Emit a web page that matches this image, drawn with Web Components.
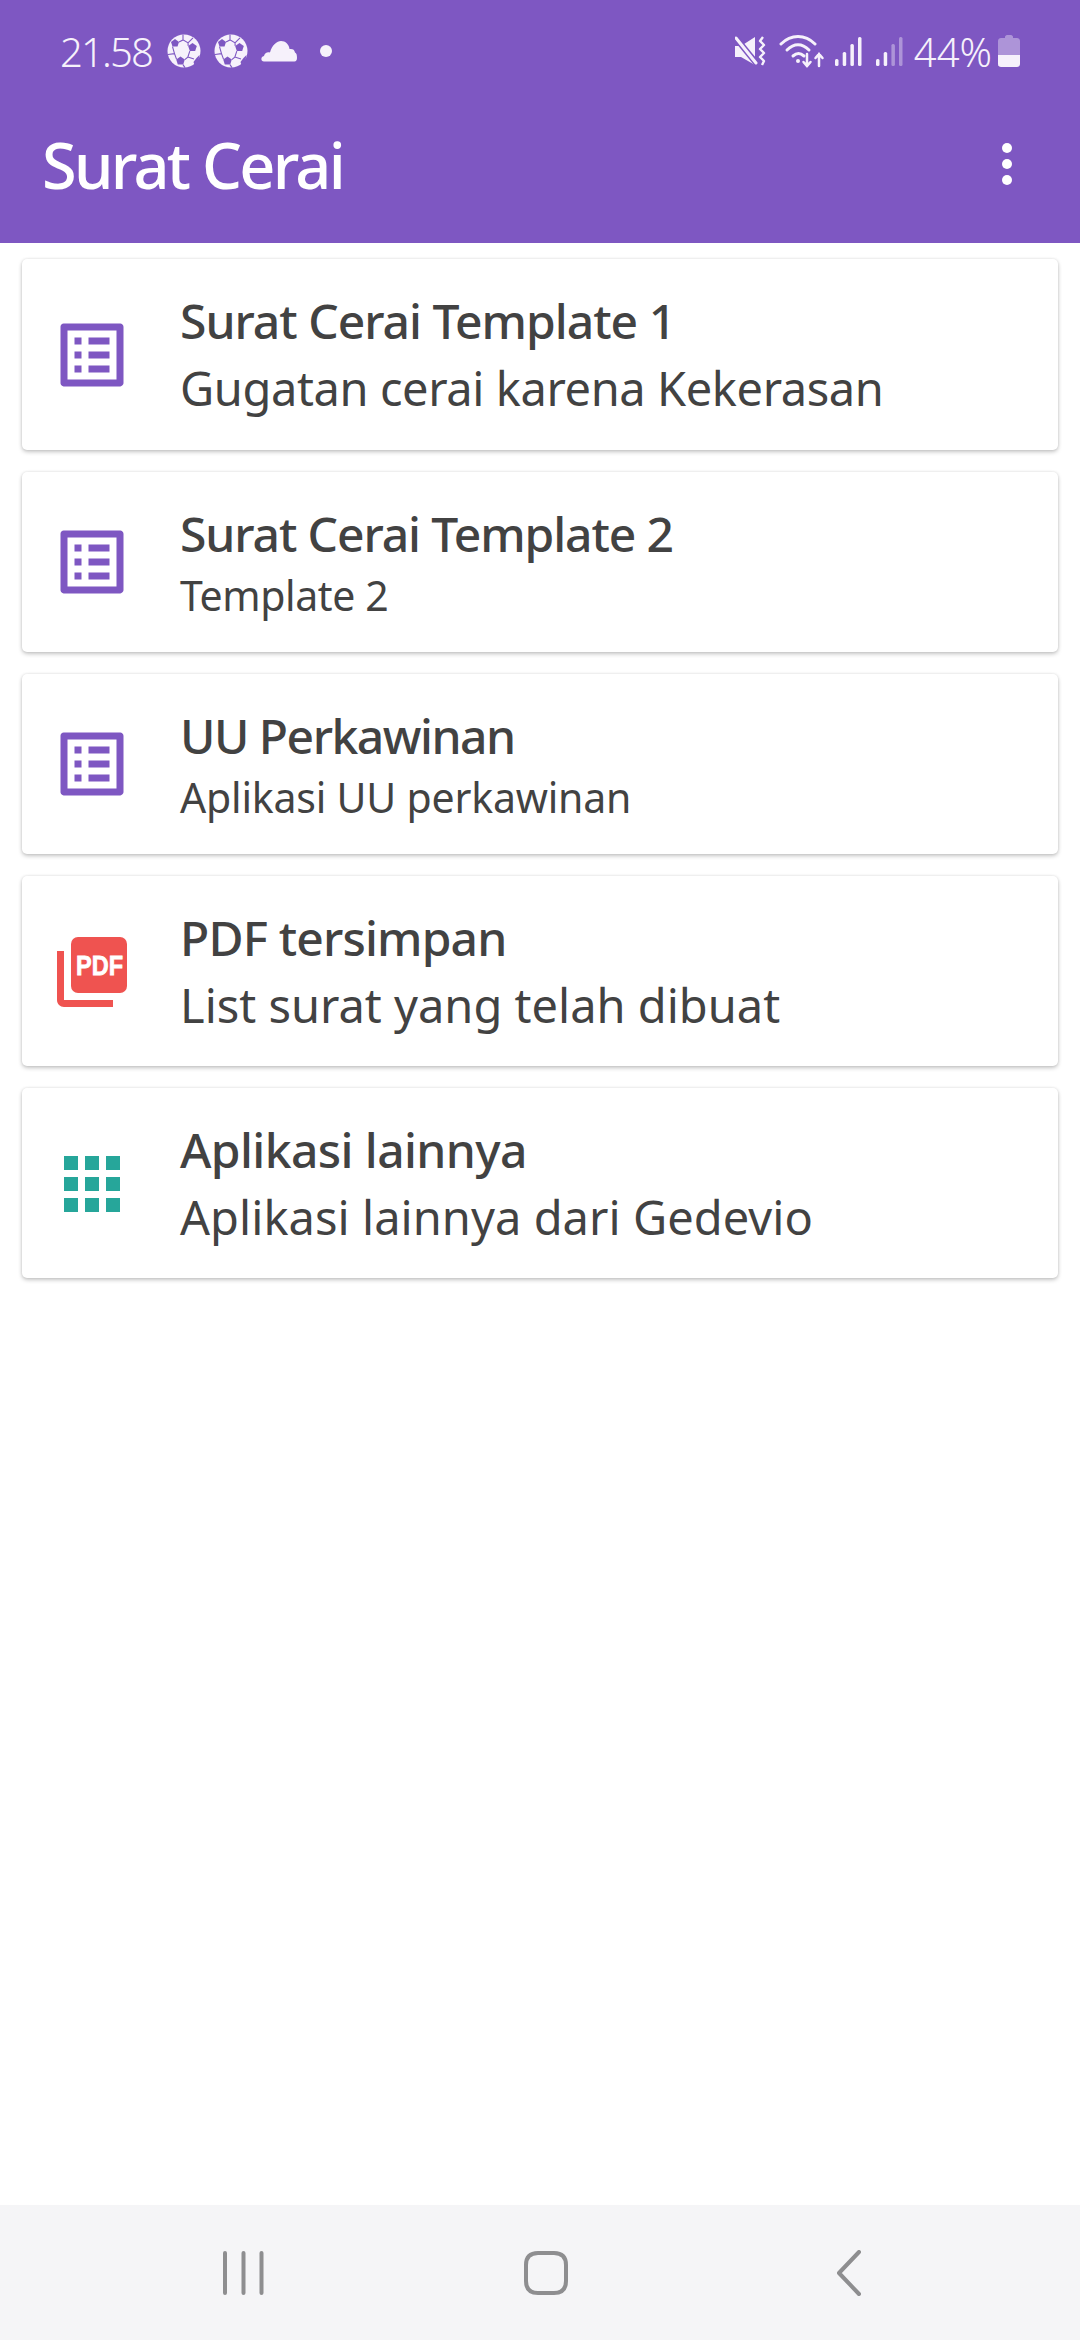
<!DOCTYPE html>
<html>
<head>
<meta charset="utf-8">
<title>Surat Cerai</title>
<style>
  html, body { margin: 0; height: 100%; background: #fff; }
  body { display: flex; flex-direction: column; height: 2340px; font-family: "Noto Sans", "Open Sans", sans-serif; }
  menu-list { flex: 1; }
</style>
</head>
<body>
<top-header title-text="Surat Cerai"></top-header>
<menu-list>
  <menu-card>
    <form-icon slot="icon"></form-icon>
    <span slot="title" style="letter-spacing:-1px">Surat Cerai Template 1</span>
    <span slot="subtitle" style="letter-spacing:-.4px">Gugatan cerai karena Kekerasan</span>
  </menu-card>
  <menu-card compact>
    <form-icon slot="icon"></form-icon>
    <span slot="title" style="letter-spacing:-1.1px">Surat Cerai Template 2</span>
    <span slot="subtitle" style="letter-spacing:-.4px">Template 2</span>
  </menu-card>
  <menu-card compact>
    <form-icon slot="icon"></form-icon>
    <span slot="title" style="letter-spacing:-1.5px">UU Perkawinan</span>
    <span slot="subtitle" style="letter-spacing:-.2px">Aplikasi UU perkawinan</span>
  </menu-card>
  <menu-card style="padding-bottom:26px">
    <pdf-icon slot="icon"></pdf-icon>
    <span slot="title" style="letter-spacing:-.85px">PDF tersimpan</span>
    <span slot="subtitle">List surat yang telah dibuat</span>
  </menu-card>
  <menu-card style="padding-bottom:26px">
    <apps-icon slot="icon"></apps-icon>
    <span slot="title" style="letter-spacing:-.6px">Aplikasi lainnya</span>
    <span slot="subtitle" style="letter-spacing:.05px">Aplikasi lainnya dari Gedevio</span>
  </menu-card>
</menu-list>
<nav-bar></nav-bar>

<script>
const BALL = `
  <svg width="34" height="34" viewBox="0 0 34 34">
    <circle cx="17" cy="17" r="16.5" fill="#f6f1fb"/>
    <g fill="#7e57c2">
      <path d="M8 5l4 2.900-1.500 4.700h-5L4 7.900z"/>
      <path d="M25.500 9l4.300 3.100-1.600 5h-5.400l-1.600-5z"/>
      <path d="M13.500 22.500l4.300 3.100-1.600 5h-5.400l-1.600-5z"/>
      <path d="M29.500 24l3 -3-1 5-4 5-1-3z"/>
    </g>
    <g stroke="#7e57c2" stroke-width="1.100" fill="none">
      <path d="M12 7.900l4-2 5 3 .2 3M16 5.900V.8M22.800 17.100l-2 6-3 2.600M20.800 23.100l6.200 2M5.500 12.600l2 7 2 5.500M7.500 19.600L1 20.500M16 30.600l2 3M21 8.900l5-5"/>
    </g>
  </svg>`;

class TopHeader extends HTMLElement {
  constructor() {
    super();
    this.attachShadow({ mode: "open" });
    this.shadowRoot.innerHTML = `
    <style>
      :host { display: block; background: #7e57c2; color: #fff; height: 243px; font-family: "Noto Sans", sans-serif; }
      .status { display: flex; align-items: center; height: 102px; padding: 0 60px; color: #f6f1fb; box-sizing: border-box; }
      .time { font-size: 40px; font-weight: 300; letter-spacing: -1.800px; margin-right: 15px; }
      .left { display: flex; align-items: center; }
      .left svg { display: block; margin-right: 13px; }
      .right { margin-left: auto; display: flex; align-items: center; }
      .pct { font-size: 40px; font-weight: 300; margin: 0 6px 0 11px; }
      .bar { display: flex; align-items: center; padding: 0 68px 17px 42px; height: 141px; box-sizing: border-box; }
      h1 { margin: 0; flex: 1; font-size: 63px; font-weight: 500; line-height: 1; letter-spacing: -2.700px; }
      .dots { display: flex; flex-direction: column; gap: 5.500px; }
      .dots i { width: 10.500px; height: 10.500px; background: #fff; border-radius: 50%; }
    </style>
    <div class="status">
      <div class="left">
        <span class="time">21.58</span>
        ${BALL}${BALL}
        <svg width="36" height="22" viewBox="0 0 36 22"><path fill="#f6f1fb" d="M3 21.500c-3.500 0-3.500-5 0-5.500 .5-3 3.500-4.500 6-3.500C11 5 16 1 20 1c4.500 0 8 3.500 8.500 8 3-.5 5 .5 5.500 3.500 1.500.5 2 2.500 2 5.500 0 2-1 3.500-2.500 3.500z"/></svg>
        <svg width="12" height="12" viewBox="0 0 12 12" style="margin-left:10px"><circle cx="6" cy="6" r="6" fill="#f6f1fb"/></svg>
      </div>
      <div class="right">
        <svg width="31" height="30" viewBox="0 0 31 30" style="margin-right:13px">
          <path fill="#f6f1fb" d="M0 10h6L20 1v28L6 21H0z"/>
          <path d="M0 1l22 27" stroke="#7e57c2" stroke-width="6"/>
          <path d="M1 2l20 25" stroke="#f6f1fb" stroke-width="3" stroke-linecap="round"/>
          <path d="M28 1l-3 4 4 4-4 4 4 4-4 4 4 4-2 4" fill="none" stroke="#f6f1fb" stroke-width="2.400" stroke-linejoin="round"/>
        </svg>
        <svg width="46" height="33" viewBox="0 0 46 33" style="margin-right:10px" fill="none" stroke="#f6f1fb" stroke-linecap="round" stroke-width="3">
          <path d="M2 9C12 -1 26 -1 36 9"/>
          <path d="M8 15c7-7 15-7 22 0"/>
          <path d="M14 21c4-3.500 7-3.500 11 0"/>
          <circle cx="19" cy="26" r="2" fill="#f6f1fb" stroke="none"/>
          <path d="M28 19v12M24.500 27l3.500 4 3.500-4M40 31V19M36.500 23l3.500-4 3.500 4" stroke-width="2.500"/>
        </svg>
        <signal-bars style="margin-right:14px"></signal-bars>
        <signal-bars faded></signal-bars>
        <span class="pct">44%</span>
        <svg width="22" height="32" viewBox="0 0 22 32">
          <path fill="#f6f1fb" opacity=".4" d="M3 3h4V2c0-1 1-2 2-2h4c1 0 2 1 2 2v1h4c1.500 0 3 1 3 3v14H0V6c0-2 1.500-3 3-3z"/>
          <path fill="#f6f1fb" d="M0 20h22v9c0 2-1.500 3-3 3H3c-1.500 0-3-1-3-3z"/>
        </svg>
      </div>
    </div>
    <div class="bar">
      <h1>${this.getAttribute("title-text")}</h1>
      <div class="dots"><i></i><i></i><i></i></div>
    </div>`;
  }
}
customElements.define("top-header", TopHeader);

class SignalBars extends HTMLElement {
  constructor() {
    super();
    this.attachShadow({ mode: "open" });
    const op = this.hasAttribute("faded") ? ' opacity=".4"' : "";
    this.shadowRoot.innerHTML = `
    <style>:host { display: block; width: 27px; height: 30px; } svg { display: block; }</style>
    <svg width="27" height="30" viewBox="0 0 27 30" fill="#f6f1fb">
      <rect x="0" y="23" width="3.500" height="7" rx="1.500"/>
      <rect x="7.700" y="16" width="3.500" height="14" rx="1.500"/>
      <rect x="15.400" y="8" width="3.500" height="22" rx="1.500"${op}/>
      <rect x="23" y="1" width="3.500" height="29" rx="1.500"${op}/>
    </svg>`;
  }
}
customElements.define("signal-bars", SignalBars);

class MenuList extends HTMLElement {
  constructor() {
    super();
    this.attachShadow({ mode: "open" });
    this.shadowRoot.innerHTML = `
    <style>
      :host { display: flex; flex-direction: column; gap: 22px; padding: 16px 22px; box-sizing: border-box; }
    </style>
    <slot></slot>`;
  }
}
customElements.define("menu-list", MenuList);

class MenuCard extends HTMLElement {
  constructor() {
    super();
    this.attachShadow({ mode: "open" });
    this.shadowRoot.innerHTML = `
    <style>
      :host { display: flex; align-items: center; background: #fff; border-radius: 5px; padding: 28px 28px 27px; color: #424242;
        box-shadow: 0 2px 4px rgba(0,0,0,.22), 0 0 3px rgba(0,0,0,.1); font-family: "Noto Sans", sans-serif; }
      :host([compact]) { padding-bottom: 29px; }
      .icon { width: 84px; height: 84px; margin-right: 46px; flex: none; }
      .title { font-size: 48px; font-weight: 500; line-height: 67px; white-space: nowrap; }
      .sub { font-size: 47px; font-weight: 400; line-height: 69px; white-space: nowrap; }
      :host([compact]) .sub { font-size: 41px; line-height: 56px; }
    </style>
    <div class="icon"><slot name="icon"></slot></div>
    <div>
      <div class="title"><slot name="title"></slot></div>
      <div class="sub"><slot name="subtitle"></slot></div>
    </div>`;
  }
}
customElements.define("menu-card", MenuCard);

class FormIcon extends HTMLElement {
  constructor() {
    super();
    this.attachShadow({ mode: "open" });
    this.shadowRoot.innerHTML = `
    <style>:host { display: block; width: 84px; height: 84px; } svg { display: block; }</style>
    <svg width="84" height="84" viewBox="0 0 24 24" fill="#7e57c2"><path d="M19 5v14H5V5h14m1.100-2H3.900c-.5 0-.9.4-.9.9v16.200c0 .4.4.9.9.9h16.200c.4 0 .9-.5.9-.9V3.900c0-.5-.5-.9-.9-.9zM11 7h6v2h-6V7zm0 4h6v2h-6v-2zm0 4h6v2h-6zM7 7h2v2H7zm0 4h2v2H7zm0 4h2v2H7z"/></svg>`;
  }
}
customElements.define("form-icon", FormIcon);

class PdfIcon extends HTMLElement {
  constructor() {
    super();
    this.attachShadow({ mode: "open" });
    this.shadowRoot.innerHTML = `
    <style>:host { display: block; width: 84px; height: 84px; } svg { display: block; }</style>
    <svg width="84" height="84" viewBox="0 0 84 84">
      <rect x="21" y="7" width="56" height="56" rx="7" fill="#ef5350"/>
      <path fill="#ef5350" d="M14 21H7v49c0 3.900 3.100 7 7 7h49v-7H14z"/>
      <text x="26" y="45" font-family="Liberation Sans, sans-serif" font-weight="700" font-size="28" fill="#fff" stroke="#fff" stroke-width=".8" textLength="47" lengthAdjust="spacingAndGlyphs">PDF</text>
    </svg>`;
  }
}
customElements.define("pdf-icon", PdfIcon);

class AppsIcon extends HTMLElement {
  constructor() {
    super();
    this.attachShadow({ mode: "open" });
    this.shadowRoot.innerHTML = `
    <style>
      :host { display: grid; grid-template-columns: repeat(3, 14px); grid-auto-rows: 14px; gap: 7px; padding: 14px; width: 56px; height: 56px; }
      i { background: #26a69a; }
    </style>
    <i></i><i></i><i></i><i></i><i></i><i></i><i></i><i></i><i></i>`;
  }
}
customElements.define("apps-icon", AppsIcon);

class NavBar extends HTMLElement {
  constructor() {
    super();
    this.attachShadow({ mode: "open" });
    this.shadowRoot.innerHTML = `
    <style>
      :host { display: flex; height: 135px; background: #f5f5f7; align-items: center; justify-content: space-between; padding: 0 218px 0 222px; box-sizing: border-box; }
      svg { display: block; }
    </style>
    <svg width="44" height="46" viewBox="0 0 44 46" fill="none" stroke="#8e8e90" stroke-width="4" stroke-linecap="round">
      <path d="M3 3v40M21.500 3v40M39.500 3v40"/>
    </svg>
    <svg width="46" height="46" viewBox="0 0 46 46" fill="none" stroke="#8e8e90" stroke-width="4">
      <path d="M15 3h16c8 0 12 4 12 12v16c0 8-4 12-12 12H15C7 43 3 39 3 31V15C3 7 7 3 15 3z"/>
    </svg>
    <svg width="36" height="46" viewBox="0 0 36 46" fill="none" stroke="#8e8e90" stroke-width="4" stroke-linecap="round" stroke-linejoin="round">
      <path d="M33 2L13 23l20 21"/>
    </svg>`;
  }
}
customElements.define("nav-bar", NavBar);
</script>
</body>
</html>
